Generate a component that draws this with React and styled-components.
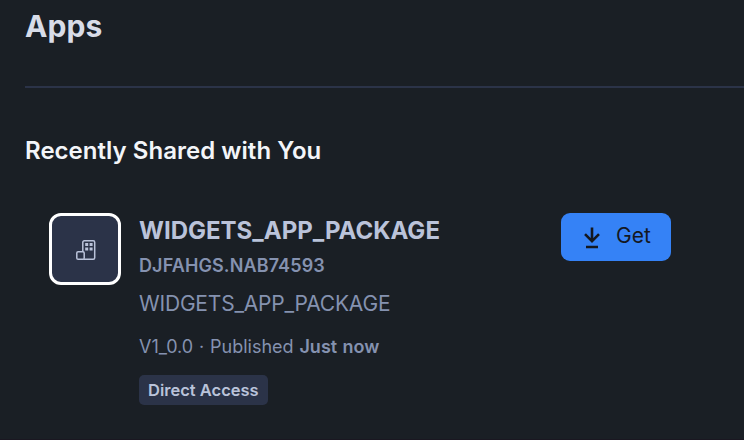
import React from "react";
import styled, { createGlobalStyle } from "styled-components";

const GlobalStyle = createGlobalStyle`
  * { box-sizing: border-box; }
  html, body { margin: 0; background: #1a1f25; overflow: hidden; }
  body { font-family: Inter, "Liberation Sans", sans-serif; }
  h1, h2, h3, p { margin: 0; }
`;

const Page = styled.main`
  display: flow-root;
  height: 440px;
  padding-left: 25px;
  overflow: hidden;
  border-bottom: 1px solid #1a1721;
  background: #1a1f25;
`;

const PageHeader = styled.header`
  height: 88px;
  padding-top: 8px;
  border-bottom: 2px solid #2b3348;
`;

const PageTitle = styled.h1`
  color: #d8dce8;
  font-size: 30px;
  line-height: 36px;
  font-weight: 700;
  letter-spacing: 0.1px;
`;

const SectionTitle = styled.h2`
  margin-top: 48px;
  color: #f3f5f9;
  font-size: 24px;
  line-height: 30px;
  font-weight: 600;
  letter-spacing: 0.03px;
`;

const AppCard = styled.article`
  display: flex;
  align-items: flex-start;
  width: 622px;
  margin: 47px 0 0 24px;
`;

const AppIcon = styled.div`
  display: grid;
  place-items: center;
  flex: none;
  width: 72px;
  height: 72px;
  padding-top: 1px;
  border: 3px solid #ffffff;
  border-radius: 12px;
  background: #2b3348;
`;

const Details = styled.div`
  display: flex;
  flex-direction: column;
  align-items: flex-start;
  flex: 1;
  margin-left: 18px;
  white-space: nowrap;
`;

const AppName = styled.h3`
  margin-top: 3px;
  color: #bac3da;
  font-size: 24px;
  line-height: 30px;
  font-weight: 700;
`;

const Namespace = styled.p`
  margin-top: 8px;
  color: #8592b0;
  font-size: 18px;
  line-height: 24px;
  font-weight: 600;
  letter-spacing: 0.11px;
`;

const Description = styled.p`
  margin-top: 12px;
  color: #8592b0;
  font-size: 21px;
  line-height: 28px;
  letter-spacing: -0.2px;
`;

const Meta = styled.p`
  margin-top: 17px;
  color: #8592b0;
  font-size: 18px;
  line-height: 24px;
  word-spacing: 0.8px;

  strong { font-weight: 600; }
`;

const Badge = styled.span`
  height: 30px;
  margin-top: 16px;
  padding: 0 9px;
  border-radius: 5px;
  background: #2b3348;
  color: #bac3da;
  font-size: 16.5px;
  line-height: 30px;
  font-weight: 600;
`;

const GetButton = styled.button`
  display: flex;
  align-items: center;
  flex: none;
  width: 110px;
  height: 48px;
  padding: 0 0 2px 22px;
  gap: 15px;
  border: 0;
  border-radius: 9px;
  background: #3582f6;
  color: #14181f;
  font: 400 21px/28px Inter, "Liberation Sans", sans-serif;

  svg { margin-top: 3px; }
`;

function BuildingIcon() {
  return (
    <svg width="24" height="24" viewBox="0 0 24 24" fill="none" stroke="#bac3da" strokeWidth="1.5">
      <rect x="9.8" y="2.8" width="11.9" height="18.4" rx="1.5" />
      <rect x="3.8" y="13.8" width="7.4" height="7.4" rx="1.3" fill="#2b3348" />
      <path fill="#bac3da" stroke="none" d="M12.2 5h3v3h-3zM16.6 5h3v3h-3zM12.2 9.6h3v3h-3zM16.6 9.6h3v3h-3z" />
    </svg>
  );
}

function DownloadIcon() {
  return (
    <svg width="18" height="22" viewBox="0 0 18 22" fill="none" stroke="currentColor" strokeWidth="2.6">
      <path d="M9 .5V14M2 7.2l7 7 7-7M3 20h12" />
    </svg>
  );
}

export default function App() {
  return (
    <>
      <GlobalStyle />
      <Page>
        <PageHeader>
          <PageTitle>Apps</PageTitle>
        </PageHeader>
        <SectionTitle>Recently Shared with You</SectionTitle>
        <AppCard>
          <AppIcon>
            <BuildingIcon />
          </AppIcon>
          <Details>
            <AppName>WIDGETS_APP_PACKAGE</AppName>
            <Namespace>DJFAHGS.NAB74593</Namespace>
            <Description>WIDGETS_APP_PACKAGE</Description>
            <Meta>
              V1_0.0 · Published <strong>Just now</strong>
            </Meta>
            <Badge>Direct Access</Badge>
          </Details>
          <GetButton type="button">
            <DownloadIcon />
            Get
          </GetButton>
        </AppCard>
      </Page>
    </>
  );
}
